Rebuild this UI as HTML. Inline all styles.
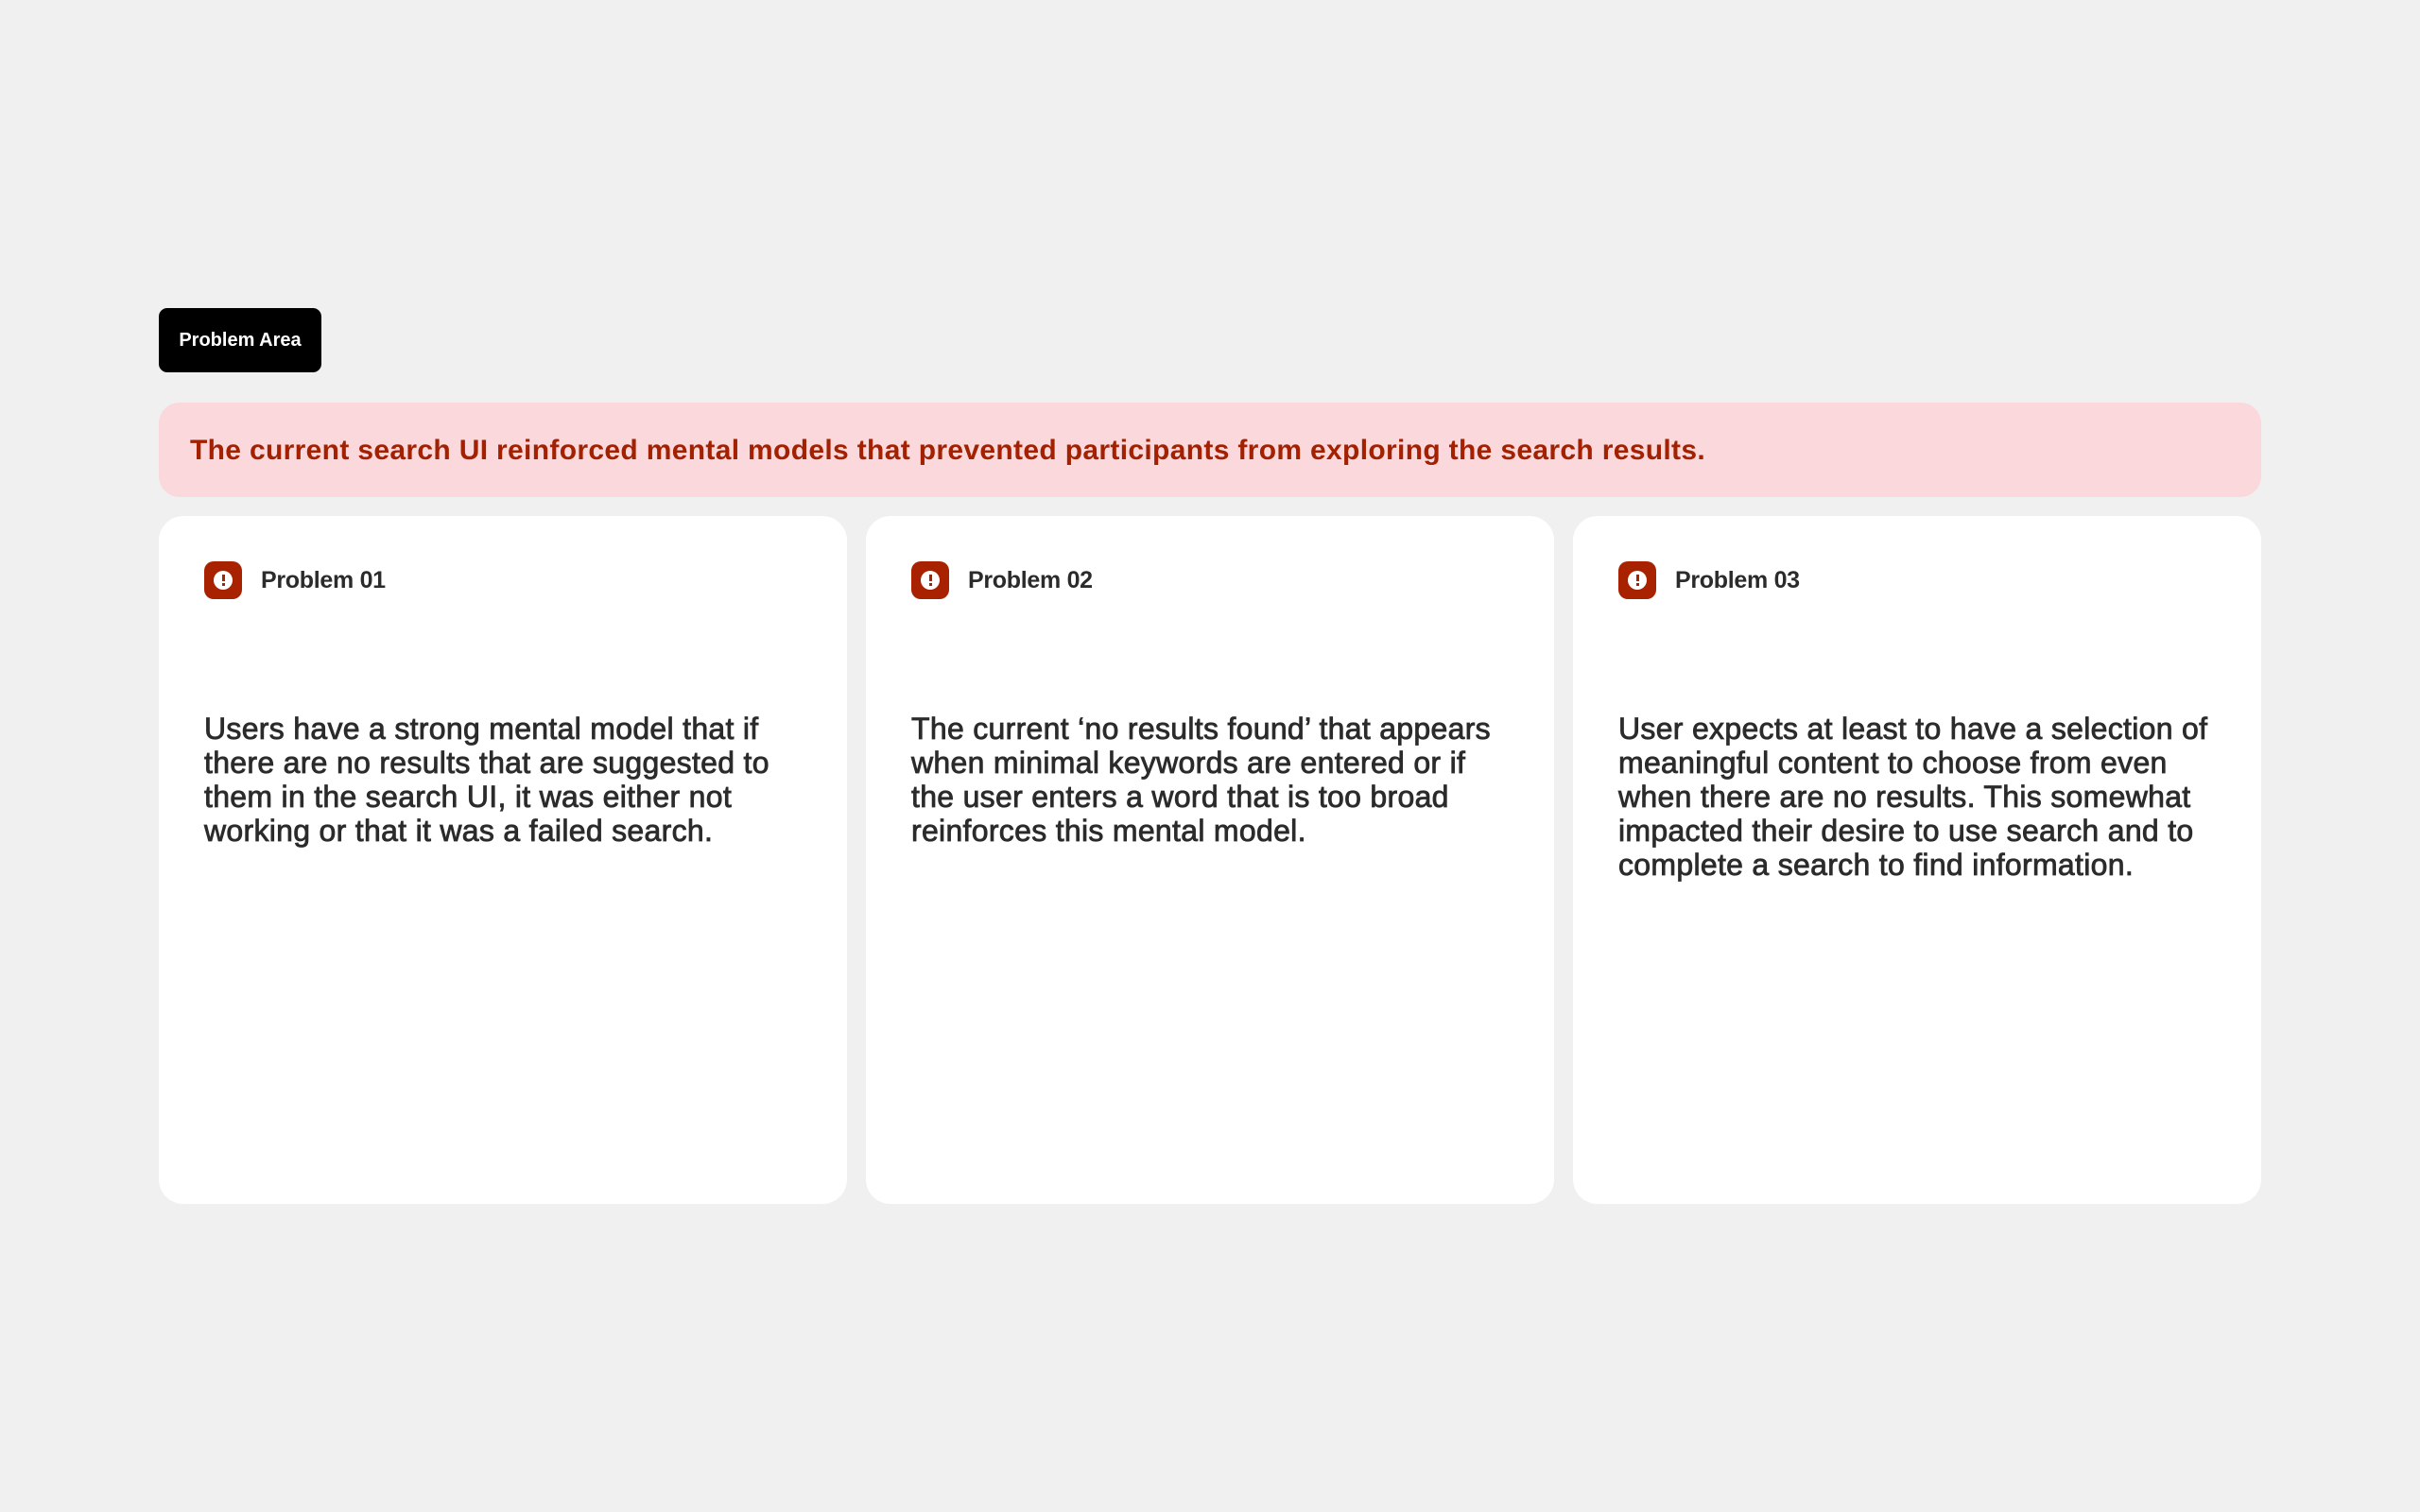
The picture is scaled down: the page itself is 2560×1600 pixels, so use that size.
<!DOCTYPE html>
<html><head><meta charset="utf-8"><style>
body{margin:0;width:2560px;height:1600px;background:#f0f0f0;font-family:"Liberation Sans",sans-serif;position:relative;overflow:hidden}
.badge{position:absolute;left:168px;top:326px;width:172px;height:68px;background:#000;border-radius:9px;color:#fff;font-weight:700;font-size:20px;line-height:68px;text-align:center}
.banner{position:absolute;left:168px;top:426px;width:2224px;height:100px;background:#fad8dc;border-radius:22px;color:#a32100;font-weight:700;font-size:30px;letter-spacing:0.33px;line-height:102px;box-sizing:border-box;padding-left:33px}
.card{position:absolute;top:546px;width:728px;height:728px;background:#fff;border-radius:26px}
.icon{position:absolute;left:48px;top:48px;width:40px;height:40px;background:#a82200;border-radius:10px}
.icon:after{content:"";position:absolute;left:10px;top:10px;width:20px;height:20px;background:#fff;border-radius:50%}
.icon i{position:absolute;left:19px;top:14px;width:2.5px;height:7px;background:#a82200;z-index:1}
.icon b{position:absolute;left:19px;top:23px;width:2.5px;height:3px;background:#a82200;z-index:1}
.title{position:absolute;left:108px;top:54px;font-size:25px;font-weight:700;color:#2b2b2b;letter-spacing:-0.3px}
.body{position:absolute;left:48px;top:207px;font-size:32px;letter-spacing:0.3px;line-height:36px;color:#2b2b2b;white-space:nowrap;-webkit-text-stroke:0.8px #2b2b2b}
</style></head><body>
<div class="badge">Problem Area</div>
<div class="banner">The current search UI reinforced mental models that prevented participants from exploring the search results.</div>
<div class="card" style="left:168px"><div class="icon"><i></i><b></b></div><div class="title">Problem 01</div>
<div class="body">Users have a strong mental model that if<br>there are no results that are suggested to<br>them in the search UI, it was either not<br>working or that it was a failed search.</div></div>
<div class="card" style="left:916px"><div class="icon"><i></i><b></b></div><div class="title">Problem 02</div>
<div class="body">The current ‘no results found’ that appears<br>when minimal keywords are entered or if<br>the user enters a word that is too broad<br>reinforces this mental model.</div></div>
<div class="card" style="left:1664px"><div class="icon"><i></i><b></b></div><div class="title">Problem 03</div>
<div class="body">User expects at least to have a selection of<br>meaningful content to choose from even<br>when there are no results. This somewhat<br>impacted their desire to use search and to<br>complete a search to find information.</div></div>
</body></html>
